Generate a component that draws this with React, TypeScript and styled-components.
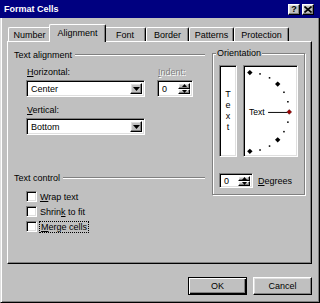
import styled, { createGlobalStyle } from 'styled-components';

const GlobalStyle = createGlobalStyle`
  html, body {
    margin: 0;
    padding: 0;
    background: #c0c0c0;
  }
  body {
    font-family: 'Liberation Sans', Arial, sans-serif;
    font-size: 9px;
    color: #000;
  }
  * {
    box-sizing: border-box;
  }
`;

const tabs = [
  { label: 'Number', width: 43 },
  { label: 'Alignment', width: 53 },
  { label: 'Font', width: 42 },
  { label: 'Border', width: 43 },
  { label: 'Patterns', width: 45 },
  { label: 'Protection', width: 55 },
];

// angles of the orientation dial, in degrees
const dial = [90, 75, 60, 45, 30, 15, -15, -30, -45, -60, -75, -90];

const Spinner = () => (
  <SpinButtons>
    <SpinButton>
      <svg width="5" height="3" viewBox="0 0 5 3">
        <path d="M2.5 0 L5 3 L0 3 Z" fill="#000" />
      </svg>
    </SpinButton>
    <SpinButton>
      <svg width="5" height="3" viewBox="0 0 5 3">
        <path d="M0 0 L5 0 L2.5 3 Z" fill="#000" />
      </svg>
    </SpinButton>
  </SpinButtons>
);

const Combo = ({ value }: { value: string }) => (
  <ComboBox>
    <FieldText>{value}</FieldText>
    <DropButton>
      <svg width="7" height="4" viewBox="0 0 7 4">
        <path d="M0 0 L7 0 L3.5 4 Z" fill="#000" />
      </svg>
    </DropButton>
  </ComboBox>
);

const Dial = () => {
  const cx = 4;
  const cy = 45;
  const r = 41;
  return (
    <svg width="51" height="88" viewBox="0 0 51 88">
      {dial.map((a) => {
        const x = cx + r * Math.cos((a * Math.PI) / 180);
        const y = cy - r * Math.sin((a * Math.PI) / 180);
        const big = Math.abs(a) === 90 || Math.abs(a) === 45;
        return big ? (
          <path
            key={a}
            d={`M${x} ${y - 2.8} L${x + 2.8} ${y} L${x} ${y + 2.8} L${x - 2.8} ${y} Z`}
            fill="#000"
          />
        ) : (
          <rect key={a} x={x - 0.8} y={y - 0.8} width="1.6" height="1.6" fill="#000" />
        );
      })}
      <text x="3" y="48.5" fontSize="9" fontFamily="Liberation Sans, Arial, sans-serif" fill="#000">
        Text
      </text>
      <line x1="23" y1="45.5" x2="43" y2="45.5" stroke="#000" strokeWidth="1" />
      <path d="M45 42.5 L47.5 45 L45 47.5 L42.5 45 Z" fill="#a00000" stroke="#400000" strokeWidth="0.5" />
    </svg>
  );
};

export default function App() {
  return (
    <>
      <GlobalStyle />
      <Window>
        <TitleBar>
          <Title>Format Cells</Title>
          <CaptionButton>?</CaptionButton>
          <CaptionButton>
            <svg width="8" height="7" viewBox="0 0 8 7">
              <path d="M0.5 0.5 L7.5 6.5 M7.5 0.5 L0.5 6.5" stroke="#000" strokeWidth="1.6" />
            </svg>
          </CaptionButton>
        </TitleBar>

        <Body>
          <TabRow>
            {tabs.map((t) => (
              <Tab key={t.label} $width={t.width} $active={t.label === 'Alignment'}>
                {t.label}
              </Tab>
            ))}
          </TabRow>

          <Panel>
            <LeftColumn>
              <GroupHeader>
                <span>Text alignment</span>
                <Rule />
              </GroupHeader>

              <FieldRow>
                <Field $width={119}>
                  <Label>
                    <u>H</u>orizontal:
                  </Label>
                  <Combo value="Center" />
                </Field>
                <Field $width={36}>
                  <Label $disabled>
                    <u>I</u>ndent:
                  </Label>
                  <SpinBox $height={17}>
                    <FieldText>0</FieldText>
                    <Spinner />
                  </SpinBox>
                </Field>
              </FieldRow>

              <Field $width={119} $gap={7}>
                <Label>
                  <u>V</u>ertical:
                </Label>
                <Combo value="Bottom" />
              </Field>

              <GroupHeader $gap={37}>
                <span>Text control</span>
                <Rule />
              </GroupHeader>

              <CheckList>
                <CheckRow>
                  <CheckBox />
                  <span>
                    <u>W</u>rap text
                  </span>
                </CheckRow>
                <CheckRow>
                  <CheckBox />
                  <span>
                    Shrin<u>k</u> to fit
                  </span>
                </CheckRow>
                <CheckRow>
                  <CheckBox />
                  <Focused>
                    <u>M</u>erge cells
                  </Focused>
                </CheckRow>
              </CheckList>
            </LeftColumn>

            <GroupBox>
              <Legend>Orientation</Legend>
              <DialRow>
                <Well $width={18}>
                  <VerticalText>
                    <span>T</span>
                    <span>e</span>
                    <span>x</span>
                    <span>t</span>
                  </VerticalText>
                </Well>
                <Well $width={55}>
                  <Dial />
                </Well>
              </DialRow>
              <DegreeRow>
                <SpinBox $height={15} $width={34}>
                  <FieldText>0</FieldText>
                  <Spinner />
                </SpinBox>
                <span>
                  <u>D</u>egrees
                </span>
              </DegreeRow>
            </GroupBox>
          </Panel>

          <ButtonRow>
            <PushButton $default>OK</PushButton>
            <PushButton>Cancel</PushButton>
          </ButtonRow>
        </Body>
      </Window>
    </>
  );
}

const raised = `
  border-style: solid;
  border-width: 1px;
  border-color: #fff #000 #000 #fff;
  box-shadow: inset -1px -1px 0 #808080, inset 1px 1px 0 #dfdfdf;
  background: #c0c0c0;
`;

const sunken = `
  border-style: solid;
  border-width: 1px;
  border-color: #808080 #fff #fff #808080;
  box-shadow: inset 1px 1px 0 #000, inset -1px -1px 0 #dfdfdf;
  background: #fff;
`;

const Window = styled.div`
  width: 320px;
  height: 303px;
  display: flex;
  flex-direction: column;
  background: #c0c0c0;
  overflow: hidden;
`;

const TitleBar = styled.div`
  height: 18px;
  display: flex;
  align-items: center;
  gap: 2px;
  padding: 0 6px 0 4px;
  background: #000080;
  color: #fff;
`;

const Title = styled.div`
  flex: 1;
  font-weight: bold;
  font-size: 9px;
`;

const CaptionButton = styled.div`
  ${raised}
  width: 12px;
  height: 11px;
  display: flex;
  align-items: center;
  justify-content: center;
  color: #000;
  font-weight: bold;
  font-size: 9px;
  line-height: 1;
`;

const Body = styled.div`
  flex: 1;
  display: flex;
  flex-direction: column;
  padding: 6px 7px 0 6px;
  border-left: 1px solid #dfdfdf;
  border-right: 1px solid #000;
  border-bottom: 1px solid #000;
  box-shadow: inset 1px 0 0 #fff, inset -1px -1px 0 #808080;
`;

const TabRow = styled.div`
  height: 17px;
  display: flex;
  align-items: flex-end;
  padding-left: 1px;
`;

const Tab = styled.div<{ $width: number; $active?: boolean }>`
  position: relative;
  z-index: ${(p) => (p.$active ? 2 : 1)};
  width: ${(p) => p.$width + (p.$active ? 4 : 0)}px;
  height: ${(p) => (p.$active ? 18 : 14)}px;
  margin: 0 ${(p) => (p.$active ? -2 : 0)}px ${(p) => (p.$active ? -1 : 0)}px;
  padding-bottom: ${(p) => (p.$active ? 2 : 0)}px;
  display: flex;
  align-items: center;
  justify-content: center;
  background: #c0c0c0;
  border-top: 1px solid #fff;
  border-left: 1px solid #fff;
  border-right: 1px solid #000;
  border-radius: 2px 2px 0 0;
  box-shadow: inset -1px 0 0 #808080;
`;

const Panel = styled.div`
  height: 223px;
  display: flex;
  align-items: flex-start;
  gap: 7px;
  padding: 5px 6px 0 6px;
  border-style: solid;
  border-width: 1px;
  border-color: #fff #000 #000 #fff;
  box-shadow: inset -1px -1px 0 #808080;
`;

const LeftColumn = styled.div`
  width: 191px;
  margin-top: 2px;
  display: flex;
  flex-direction: column;
`;

const GroupHeader = styled.div<{ $gap?: number }>`
  height: 12px;
  margin-top: ${(p) => p.$gap ?? 0}px;
  display: flex;
  align-items: center;
  gap: 3px;
`;

const Rule = styled.div`
  flex: 1;
  height: 2px;
  border-top: 1px solid #808080;
  border-bottom: 1px solid #fff;
`;

const FieldRow = styled.div`
  display: flex;
  gap: 12px;
  margin: 5px 0 0 12px;
`;

const Field = styled.div<{ $width: number; $gap?: number }>`
  width: ${(p) => p.$width}px;
  display: flex;
  flex-direction: column;
  gap: 2px;
  margin-top: ${(p) => p.$gap ?? 0}px;
  margin-left: ${(p) => (p.$gap ? 12 : 0)}px;
`;

const Label = styled.div<{ $disabled?: boolean }>`
  height: 12px;
  line-height: 12px;
  padding-left: 1px;
  color: ${(p) => (p.$disabled ? '#808080' : '#000')};
  text-shadow: ${(p) => (p.$disabled ? '1px 1px 0 #fff' : 'none')};
`;

const ComboBox = styled.div`
  ${sunken}
  height: 17px;
  display: flex;
  align-items: stretch;
  padding: 2px;
`;

const FieldText = styled.div`
  flex: 1;
  display: flex;
  align-items: center;
  padding-left: 2px;
`;

const DropButton = styled.div`
  ${raised}
  width: 12px;
  display: flex;
  align-items: center;
  justify-content: center;
`;

const SpinBox = styled.div<{ $height: number; $width?: number }>`
  ${sunken}
  width: ${(p) => (p.$width ? `${p.$width}px` : '100%')};
  height: ${(p) => p.$height}px;
  display: flex;
  align-items: stretch;
  padding: 2px;
`;

const SpinButtons = styled.div`
  width: 12px;
  display: flex;
  flex-direction: column;
`;

const SpinButton = styled.div`
  ${raised}
  flex: 1;
  display: flex;
  align-items: center;
  justify-content: center;
`;

const CheckList = styled.div`
  margin: 5px 0 0 12px;
  display: flex;
  flex-direction: column;
`;

const CheckRow = styled.div`
  height: 15px;
  display: flex;
  align-items: center;
  gap: 3px;
`;

const CheckBox = styled.div`
  ${sunken}
  width: 11px;
  height: 11px;
`;

const Focused = styled.span`
  outline: 1px dotted #000;
  outline-offset: 0;
  padding: 0 1px;
`;

const GroupBox = styled.div`
  position: relative;
  width: 93px;
  height: 142px;
  margin-top: 6px;
  padding: 11px 6px 0 6px;
  border: 1px solid #808080;
  box-shadow: inset 1px 1px 0 #fff, 1px 1px 0 #fff;
`;

const Legend = styled.span`
  position: absolute;
  top: -7px;
  left: 3px;
  padding: 0 1px;
  line-height: 12px;
  background: #c0c0c0;
`;

const DialRow = styled.div`
  display: flex;
  gap: 6px;
`;

const Well = styled.div<{ $width: number }>`
  ${sunken}
  width: ${(p) => p.$width}px;
  height: 92px;
  padding: 2px;
  display: flex;
  align-items: center;
  justify-content: center;
`;

const VerticalText = styled.div`
  display: flex;
  flex-direction: column;
  align-items: center;
  line-height: 11px;
`;

const DegreeRow = styled.div`
  margin-top: 16px;
  display: flex;
  align-items: center;
  gap: 5px;
`;

const ButtonRow = styled.div`
  margin-top: 13px;
  display: flex;
  justify-content: flex-end;
  gap: 6px;
`;

const PushButton = styled.div<{ $default?: boolean }>`
  width: 59px;
  height: 18px;
  display: flex;
  align-items: center;
  justify-content: center;
  background: #c0c0c0;
  border: 1px solid ${(p) => (p.$default ? '#000' : 'transparent')};
  ${(p) =>
    p.$default
      ? `box-shadow: inset 1px 1px 0 #fff, inset -1px -1px 0 #000, inset -2px -2px 0 #808080;`
      : `border-color: #fff #000 #000 #fff; box-shadow: inset -1px -1px 0 #808080, inset 1px 1px 0 #dfdfdf;`}
`;
